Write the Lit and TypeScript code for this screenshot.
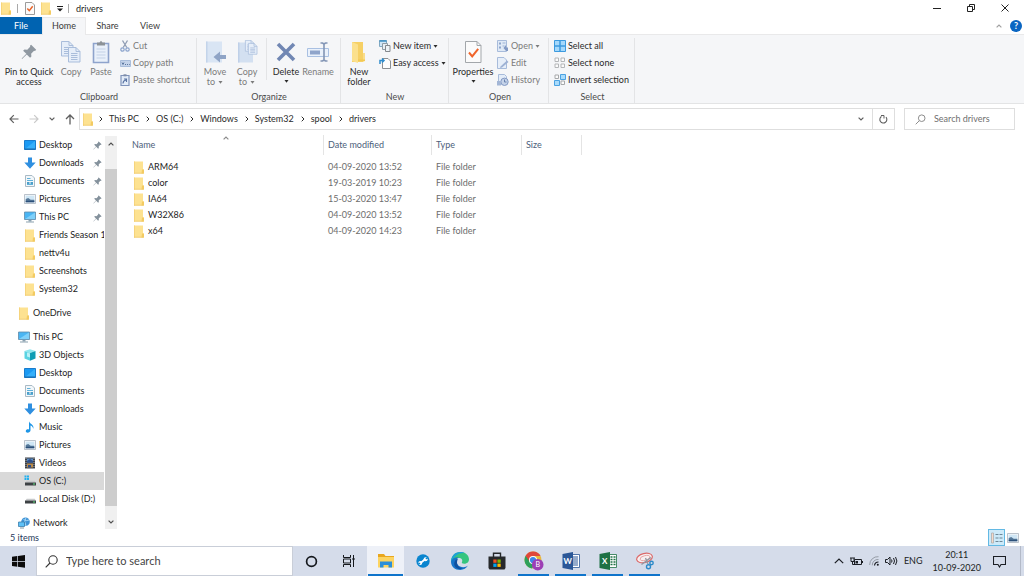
import { LitElement, html, css, svg, nothing, TemplateResult } from "lit";
import { customElement, property } from "lit/decorators.js";
import { classMap } from "lit/directives/class-map.js";

type Art = { box: string; w: number; h: number; art: TemplateResult };

const art = (w: number, h: number, body: TemplateResult, box = `0 0 ${w} ${h}`): Art => ({ box, w, h, art: body });

const folder = svg`<path d="M1 .5h9v8h1v4H1z" fill="#fde291"/><path d="M1 .5h1v12H1z" fill="#f6d47c"/><path d="M9 8.500h2v4H8.500z" fill="#f3cb62"/><path d="M1 11.800h9.500v.7H1z" fill="#eec765"/>`;
const pinShape = svg`<path d="M7.600.6l3.800 3.800-.9.900-.7-.2-2.200 2.200.2 2-1 1L4.300 7.800.8 11.200l-.3-.3L4 7.400 1.600 5.100l1-1 2.100.2L6.900 2l-.2-.6z"/>`;
const picture = svg`<path d="M.5 1.500h11v9H.5z" fill="#f4f7fa" stroke="#a9b4be" stroke-width=".8"/><path d="M1.700 2.700h8.600v6.500H1.700z" fill="#cfe6f5"/><path d="M1.700 6l2.500-1 2.500 1.700h3.600v2.500H1.700z" fill="#56799a"/><path d="M1.700 7.800h8.600v1.400H1.700z" fill="#2c507a"/>`;
const page = (x: number, y: number) => svg`<path transform="translate(${x} ${y})" d="M.5.5h7.500l4 4v10.500H.5z" fill="#e6eef9" stroke="#a9bddb"/><path transform="translate(${x} ${y})" d="M8 .5v4h4M3 6.500h6.500M3 8.500h6.500M3 10.500h6.500M3 12.500h6.500" fill="none" stroke="#a9bddb"/>`;
const disk = svg`<path d="M1.500 7.500l1.200-1.800h8l1 1.800z" fill="#c7c9cb"/><path d="M1 7.500h11v3H1z" fill="#3d4144"/><path d="M9 8.500h2v1H9z" fill="#5be07a"/>`;
const flag = (a: string) => svg`<path d="M0 1.700L5.300 1v5H0zM6 .9L13 0v6H6zM0 6.700h5.300v5L0 11zM6 6.700h7v6l-7-.9z" fill=${a}/>`;

const ICONS: Record<string, Art> = {
  folder: art(12, 13, folder),
  folderBig: art(16, 22, svg`<path d="M1 1h11v20H1z" fill="#f6d065"/><path d="M1 1l6 2.500V22l-6-2z" fill="#fbe08d"/><path d="M12 12h2v8l-2 1z" fill="#f9dd8a"/><path d="M7 20h7v-1.500H7z" fill="#f3c953"/>`),
  check: art(10, 13, svg`<path d="M.5.5h6.500l2.500 2.500v9.500h-9z" fill="#fbfbfb" stroke="#9b9b9b"/><path d="M2.300 6.500l2 2.200 3.400-4.500" fill="none" stroke="#e8642a" stroke-width="1.500"/>`),
  checkBig: art(17, 22, svg`<path d="M.5.5H12l4 4v17H.5z" fill="#fbfbfb" stroke="#a3a7ab"/><path d="M12 .5v4h4" fill="none" stroke="#a3a7ab"/><path d="M4 11.500l3.200 3.800 6-7.500" fill="none" stroke="#f0642a" stroke-width="2"/>`),
  pinBig: art(16, 18, svg`<g fill="#8f98a1">${pinShape}</g>`, "0 0 12 12"),
  pin: art(9, 9, svg`<g fill="#84919c">${pinShape}</g>`, "0 0 12 12"),
  copy: art(20, 22, svg`${page(0, 0)}${page(7, 6)}`),
  paste: art(18, 24, svg`<path d="M1.500 3.500h15v19h-15z" fill="#e9f0fa" stroke="#8ea3cc" stroke-width="1.600"/><path d="M5 5.500V2.500h2.500L9 .7l1.500 1.800H13v3z" fill="#8c9297"/><path d="M4.500 9h9M4.500 12h9M4.500 15h9M4.500 18h9" stroke="#c3d1e6"/>`),
  cut: art(10, 12, svg`<path d="M2.500.5l4.300 7M7.500.5l-4.300 7" stroke="#8f9cb3" stroke-width="1.300"/><circle cx="2.500" cy="9.500" r="1.700" fill="none" stroke="#8aa3cc" stroke-width="1.200"/><circle cx="7.500" cy="9.500" r="1.700" fill="none" stroke="#8aa3cc" stroke-width="1.200"/>`),
  path: art(11, 7, svg`<path d="M.5.5h10v6H.5z" fill="#c4d3ea" stroke="#a9bddb"/><path d="M2 2.500l1 2 1-2M5 4.500h1M7 4.500h1M9 4.500h.8" stroke="#5d779f" fill="none"/>`),
  shortcut: art(10, 12, svg`<path d="M1 1.500h8v10H1z" fill="#e3ecf8" stroke="#7f93bb" stroke-width="1.200"/><path d="M3.500.3h3v2h-3z" fill="#7f8da8"/><path d="M3 9.500q0-3 3-3.500M4 5h2.500v3" fill="none" stroke="#5b74a4" stroke-width="1.100"/>`),
  move: art(21, 22, svg`<path d="M1 .5h16v21H1z" fill="#d9e5f4"/><path d="M1 .5h1.500v21H1z" fill="#c3d4ea"/><path d="M21 14h-6v-3.500L8.500 16l6.500 5.500V18h6z" fill="#8fa4c6"/>`),
  copyTo: art(21, 23, svg`<path d="M1 2.500h15v20H1z" fill="#d3e0f1"/><path d="M1 2.500h1.500v20H1z" fill="#bfd0e8"/><g transform="translate(8 0) scale(.75)">${page(0, 0)}${page(4, 4)}</g>`),
  del: art(20, 20, svg`<path d="M2 2l16 16M18 2L2 18" stroke="#7187b3" stroke-width="3.600"/>`),
  rename: art(22, 20, svg`<path d="M.5 6.500h21v8H.5z" fill="#eaf1fb" stroke="#a9c0e2"/><path d="M3 8.500h10v4H3z" fill="#8fa4ca"/><path d="M13.500 1h2l1.500 1 1.500-1h2M17 2v16M13.500 19h2l1.500-1 1.500 1h2" fill="none" stroke="#8295b5" stroke-width="1.600"/>`),
  newItem: art(12, 12, svg`<path d="M.5.5h7v6h-7z" fill="#cfe6f7" stroke="#7fa8c2"/><path d="M.5 1h7" stroke="#3b8fc4" stroke-width="1.500"/><path d="M3.500 3.500h5v6h-5z" fill="#e8f0f6" stroke="#8f9ca6"/><path d="M6.500 5.500H11v6H6.500z" fill="#eef3f7" stroke="#85898e"/>`),
  easy: art(12, 12, svg`<path d="M3.500 1.500h5.500l2.500 2.500v7.500h-8z" fill="#fdfdfd" stroke="#8b8f93"/><path d="M1 7V3.500h3.500M3 1.500l2 2-2 2" fill="none" stroke="#2f8ccc" stroke-width="1.500"/>`),
  open: art(12, 12, svg`<path d="M.5.5h9v11h-9z" fill="#dfe9f6" stroke="#a7bbdb"/><path d="M2 2.500h2v2H2zM2 6.500h2v2H2z" fill="#8ea6cc"/><path d="M5.500 3h3M5.500 6h2" stroke="#9db3d5"/><path d="M11 7.500H9V5L6.500 8 9 11h2z" fill="#8299c4"/>`),
  edit: art(12, 12, svg`<path d="M.5.500h6.500l2.500 2.500v8.500h-9z" fill="#e6eef9" stroke="#a7bbdb"/><path d="M3.500 9.500l6.500-6 1.500 1.500-6.500 5.500-2 .5z" fill="#9db1d4"/>`),
  history: art(12, 12, svg`<path d="M1.500.500h6l2 2v7h-8z" fill="#e3ecf8" stroke="#a7bbdb"/><circle cx="7.500" cy="7.800" r="3.700" fill="#c5d3e9" stroke="#8299c4"/><path d="M7.500 5.500v2.500h2" fill="none" stroke="#6a82ae"/><path d="M0 7h4v4.500H0z" fill="#a3b6d6"/>`),
  all: art(12, 12, svg`<path d="M.5.500h5.500v5.500h-5.500zM6 .500h5.500v5.500H6zM.5 6h5.500v5.500h-5.500zM6 6h5.500v5.500H6z" fill="#a4d8fb" stroke="#3c9ade"/>`),
  none: art(12, 12, svg`<path d="M1 1h3.500v3.500H1zM7 1h3.500v3.500H7zM1 7h3.500v3.500H1zM7 7h3.500v3.500H7z" fill="#fbfbfb" stroke="#b4b6b8"/>`),
  invert: art(12, 12, svg`<path d="M1 1h3.500v3.500H1zM7 7h3.500v3.500H7z" fill="#fbfbfb" stroke="#a6a8aa"/><path d="M6.500.500h5v5h-5zM.5 6.500h5v5h-5z" fill="#a9dbfb" stroke="#4ba2e2"/>`),
  desktop: art(12, 12, svg`<path d="M.5 1.500h11v9H.5z" fill="#1b9af3" stroke="#1a7ccc"/><path d="M1 10L11 2v8z" fill="#35b0fb"/><path d="M.5 10h11" stroke="#1a69a8"/>`),
  downloads: art(12, 12, svg`<path d="M4 .500h4V5.500h3.700L6 11.800.3 5.500H4z" fill="#2f8fe0"/>`),
  documents: art(12, 12, svg`<path d="M1.500.500h6.500l2.500 2.500v8.500h-9z" fill="#f3f7fa" stroke="#a9bac5"/><path d="M3 3.500h3.500M3 5.500h6M3 9.500h6" stroke="#5fb1da"/><path d="M3 7h2.500v2H3zM6.500 7H9v2H6.500z" fill="#4c9fc9"/>`),
  pictures: art(12, 12, picture),
  pc: art(12, 12, svg`<path d="M.500 1h11v7.500H.500z" fill="#4ab5f3" stroke="#5f8aa8" stroke-width=".8"/><path d="M1 8L11 1.500V8z" fill="#7fd0fa"/><path d="M4.500 9h3v1.300h-3zM2 10.500h8v1H2z" fill="#8ba1b0"/>`),
  objects: art(12, 12, svg`<path d="M.5 2L6 .3 11.500 2 6 4z" fill="#8ee6ee"/><path d="M.5 2L6 4v7.800L.5 9.500z" fill="#5ad3e2"/><path d="M11.500 2L6 4v7.800l5.500-2.300z" fill="#0f9db4"/><path d="M3 3.500l3 1v4l-3-1z" fill="#b9f1f6"/>`),
  music: art(12, 12, svg`<path d="M5 .3c.5 2.700 5.500 3.200 4.200 7.500-.2-2.200-1.700-3-2.700-3.300V9.300c0 2.800-4.700 3.300-4.700 1 0-1.700 1.700-2.300 3.200-1.800z" fill="#1e96e6"/>`),
  videos: art(12, 12, svg`<path d="M1 .500h10v11H1z" fill="#3a3f47"/><path d="M3 1.500h6v4H3z" fill="#5d8fc7"/><path d="M3 6.500h6v4H3z" fill="#b98a4a"/><path d="M3 4l3-2 3 2v1.500H3zM4 8h3v2.500H4z" fill="#2e4f8a"/><path d="M2 1v10.500M10 1v10.500" stroke="#c8ccd0" stroke-dasharray="1 1" stroke-width=".8"/>`),
  os: art(12, 12, svg`${disk}<path d="M.5.500h2v2h-2zM3 .500h2v2H3zM.5 3h2v2h-2zM3 3h2v2H3z" fill="#22b0ee"/>`),
  disk: art(12, 12, disk),
  network: art(12, 12, svg`<circle cx="7.500" cy="4.800" r="4.300" fill="#3f93d6"/><path d="M5.500 2.500q3 2 5.500.5M8 .5q-2.500 4 0 8.500" stroke="#a5d6f5" fill="none"/><path d="M.5 5h6v4.500h-6z" fill="#5ec1f7" stroke="#3c7dab" stroke-width=".8"/><path d="M2 11h4" stroke="#8499a6"/>`),
  search: art(11, 11, svg`<circle cx="6.700" cy="4.200" r="3.300" fill="none" stroke="currentColor"/><path d="M4.300 6.700L.7 10.300" stroke="currentColor"/>`),
  searchBig: art(13, 13, svg`<circle cx="8" cy="5" r="4.200" fill="none" stroke="currentColor" stroke-width="1.100"/><path d="M5 8L.7 12.300" stroke="currentColor" stroke-width="1.100"/>`),
  back: art(10, 10, svg`<path d="M9.500 5H1.500M4.800 1.200L1 5l3.800 3.800" fill="none" stroke="currentColor" stroke-width="1.200"/>`),
  forward: art(10, 10, svg`<path d="M.5 5h8M5.200 1.200L9 5 5.200 8.800" fill="none" stroke="currentColor" stroke-width="1.200"/>`),
  up: art(10, 11, svg`<path d="M5 10.500V1.500M1 5l4-4 4 4" fill="none" stroke="currentColor" stroke-width="1.300"/>`),
  right: art(4, 6, svg`<path d="M.7.700L3 3 .7 5.300" fill="none" stroke="currentColor"/>`),
  down: art(6, 4, svg`<path d="M.6.600L3 3 5.400.6" fill="none" stroke="currentColor" stroke-width="1.200"/>`),
  upSmall: art(6, 4, svg`<path d="M.6 3.400L3 1l2.400 2.400" fill="none" stroke="currentColor" stroke-width="1.200"/>`),
  caret: art(5, 3, svg`<path d="M.5 0h4L2.500 2.700z" fill="currentColor"/>`),
  quick: art(6, 6, svg`<path d="M0 .5h6" stroke="currentColor"/><path d="M0 2.500h6L3 5.500z" fill="currentColor"/>`),
  refresh: art(9, 9, svg`<path d="M2.500 1.500A3.500 3.500 0 1 0 7 2.200" fill="none" stroke="currentColor" stroke-width="1.100"/><path d="M2 .5h3V3.500" fill="none" stroke="currentColor"/>`),
  min: art(8, 8, svg`<path d="M0 4.500h8" stroke="currentColor"/>`),
  max: art(8, 8, svg`<path d="M.5 2.500h5v5h-5zM2.500 2V.500h5v5H6" fill="none" stroke="currentColor"/>`),
  close: art(8, 8, svg`<path d="M.5.500l7 7M7.500.500l-7 7" stroke="currentColor"/>`),
  details: art(14, 14, svg`<path d="M1.500 2h2v10h-2z" fill="#f6d9c8" stroke="#a8a8a8" stroke-width=".7"/><path d="M5.500 3.500h3M9.500 3.500h3M5.500 7h3M9.500 7h3M5.500 10.500h3M9.500 10.500h3" stroke="#6d8797"/>`),
  windows: art(13, 13, flag("#0b0b0b")),
  cortana: art(13, 13, svg`<circle cx="6.500" cy="6.500" r="4.900" fill="none" stroke="#15181d" stroke-width="1.700"/>`),
  taskview: art(14, 12, svg`<path d="M1.500 0v2.500h7V0M1.500 12V9.500h7V12M1.500 4h7v4h-7z" fill="none" stroke="#15181d"/><path d="M11.500 0v12" stroke="#15181d"/><path d="M10.500 3h2v2h-2z" fill="#15181d"/>`),
  explorer: art(18, 16, svg`<path d="M1 1h6l1.500 2H17v4H1z" fill="#e9a71f"/><path d="M1 4h16v10.500H1z" fill="#fcd462"/><path d="M3 14.500V8.500h12v6h-3.500v-2.500h-5v2.500z" fill="#2b8fd9"/>`),
  tool: art(14, 14, svg`<circle cx="7" cy="7" r="6.700" fill="#0a85cf"/><path d="M4.500 9l5-4" stroke="#fff" stroke-width="1.900"/><circle cx="4.300" cy="9" r="1.900" fill="#fff"/><circle cx="9.600" cy="5.200" r="2" fill="#fff"/><path d="M2.300 10.300l1.800-1.300M9.800 5l2-1.500" stroke="#0a85cf" stroke-width="1.300"/>`),
  edge: art(18, 18, svg`<path d="M0 10C0 4 4 0 9.300 0 14.500 0 18 3.500 18 7.300c0 3-2.300 4.500-4.800 4.500-2 0-2.800-.8-2.200-1.700.8-1.500 0-4-3-4C4 6.100 1 8 0 10z" fill="#36c57f"/><path d="M0 10C0 4 4 0 9.300 0c2 0 3.500.5 4.700 1.300-6-1-10 1.700-14 8.700z" fill="#1d9fd8"/><path d="M0 9.500C1 6.500 4 5 7.500 5.200 4.500 7 5 12.500 9 14.500c3 1.300 6 .6 8-.9-1.500 2.800-4.500 4.400-7.800 4.400C4 18 0 14.500 0 9.500z" fill="#1674c9"/><path d="M6.200 9c-1 4 2 7.500 6 7.300-3.500 2-8.700 0-9-4.300C3 9.500 5 7 7 6.500 6.600 7.200 6.300 8 6.200 9z" fill="#10509f"/>`),
  store: art(18, 18, svg`<path d="M5.500 5V1.200h7V5" fill="none" stroke="#26282b" stroke-width="1.400"/><path d="M.5 4.500h17V16l-1 1.500h-15L.5 16z" fill="#26282b"/><path d="M5.300 7.500h3.300v3.300H5.300z" fill="#f25022"/><path d="M9.400 7.500h3.300v3.300H9.400z" fill="#7fba00"/><path d="M5.300 11.600h3.300v3.300H5.300z" fill="#00a4ef"/><path d="M9.400 11.600h3.300v3.300H9.400z" fill="#ffb900"/>`),
  chrome: art(20, 20, svg`<circle cx="9" cy="9" r="8.500" fill="#e8b93a"/><path d="M9 9L1.600 4.800A8.500 8.500 0 0 0 8 17.400L12 11z" fill="#2da05a"/><path d="M1.600 4.800A8.500 8.500 0 0 1 16.600 5H9.500L5.500 10.500z" fill="#e0463a"/><circle cx="9" cy="9" r="4" fill="#fff"/><circle cx="9" cy="9" r="3.100" fill="#3f86e8"/><circle cx="13.700" cy="13.700" r="5.800" fill="#9c3fb5"/><text x="13.700" y="16" text-anchor="middle" font-size="7" fill="#fff">B</text>`),
  word: art(18, 18, svg`<path d="M9 2.500h8.500v13H9z" fill="#fff" stroke="#2b5797" stroke-width=".8"/><path d="M11 5h5M11 7h5M11 9h5M11 11h5M11 13h5" stroke="#2b5797"/><path d="M.5 2L11 0v18L.5 16z" fill="#2b5797"/><text x="5.800" y="12" text-anchor="middle" font-size="8" font-weight="700" fill="#fff">W</text>`),
  excel: art(18, 18, svg`<path d="M9 2.500h8.500v13H9z" fill="#fff" stroke="#1e7145" stroke-width=".8"/><path d="M11.500 5h2M14.500 5h2M11.500 7.500h2M14.500 7.500h2M11.500 10h2M14.500 10h2M11.500 12.500h2M14.500 12.500h2" stroke="#1e7145" stroke-width="1.300"/><path d="M.5 2L11 0v18L.5 16z" fill="#1e7145"/><text x="5.800" y="12" text-anchor="middle" font-size="8" font-weight="700" fill="#fff">X</text>`),
  snip: art(18, 18, svg`<ellipse cx="8.500" cy="6" rx="8" ry="4.500" transform="rotate(-14 8.500 6)" fill="#f7eff0" stroke="#dc6a6a" stroke-width="1.200"/><ellipse cx="9" cy="6" rx="5" ry="2.300" transform="rotate(-14 9 6)" fill="none" stroke="#e39a9a" stroke-width=".8"/><path d="M5.500 12.500L15 5.500M12 12L9.500 6" stroke="#8f9aa4" stroke-width="1.300"/><circle cx="12.500" cy="14.800" r="2" fill="none" stroke="#2c8ac9" stroke-width="1.400"/><circle cx="15.500" cy="11" r="1.700" fill="none" stroke="#2c8ac9" stroke-width="1.400"/>`),
  trayUp: art(10, 6, svg`<path d="M.8 5.200L5 1l4.200 4.200" fill="none" stroke="currentColor" stroke-width="1.200"/>`),
  battery: art(13, 9, svg`<path d="M4.500 2.500h7v5h-7z" fill="none" stroke="currentColor"/><path d="M12 4h1v2h-1z" fill="currentColor"/><path d="M5.500 4h2.500v2.500H5.500z" fill="currentColor"/><path d="M0 1h5M1 1v3.500h3V1M2.500 4v3.500H5" fill="none" stroke="currentColor"/>`),
  wifi: art(10, 10, svg`<path d="M.7 9A8 8 0 0 1 9.500.7M3.300 9.300A5.500 5.500 0 0 1 9.500 3.500" fill="none" stroke="#8d949e" stroke-width=".9"/><path d="M5.500 9.500A4 4 0 0 1 9.500 6" fill="none" stroke="currentColor" stroke-width="1.200"/><circle cx="8.800" cy="8.800" r="1" fill="currentColor"/>`),
  sound: art(13, 10, svg`<path d="M.5 3.500h2L5 1v8L2.500 6.500h-2z" fill="none" stroke="currentColor"/><path d="M6.500 3.500q1 1.500 0 3M8.500 2q2 3 0 6M10.500 1q2.800 4 0 8" fill="none" stroke="currentColor"/>`),
  notify: art(13, 13, svg`<path d="M.5 1.500h12v8H8l-1.500 2.500L5 9.500H.5z" fill="none" stroke="currentColor" stroke-width="1.100"/>`),
};

const icon = (name: string) => {
  const i = ICONS[name];
  return html`<svg class="icon" width=${i.w} height=${i.h} viewBox=${i.box} aria-hidden="true">${i.art}</svg>`;
};

const base = css`
  * { box-sizing: border-box; }
  button, input { font: inherit; color: inherit; background: none; border: 0; margin: 0; padding: 0; outline: none; }
  a { color: inherit; text-decoration: none; }
  ul, ol { list-style: none; margin: 0; padding: 0; }
  .icon { display: block; flex: none; }
`;

type Cmd = { label: string; icon: string; off?: boolean; caret?: boolean };

@customElement("ribbon-button")
class RibbonButton extends LitElement {
  @property() label = "";
  @property() tail = "";
  @property() icon = "";
  @property({ type: Boolean }) off = false;
  @property({ type: Boolean }) caret = false;
  @property({ type: Boolean }) big = false;

  static styles = [base, css`
    :host { display: block; }
    .cmd { display: flex; align-items: center; gap: 2px; height: 16px; color: #2a2a2a; white-space: nowrap; }
    .cmd.off { color: #7b7b7b; }
    .slot { width: 12px; display: flex; justify-content: center; }
    .big { flex-direction: column; width: 100%; height: auto; line-height: 10px; }
    .big .slot { width: auto; height: 27px; align-items: center; }
    .label { display: block; }
    .tail { display: flex; align-items: center; justify-content: center; gap: 3px; min-height: 8px; }
  `];

  render() {
    const cls = classMap({ cmd: true, off: this.off, big: this.big });
    return html`<button class=${cls} ?disabled=${this.off}>
      <span class="slot">${icon(this.icon)}</span>
      ${this.big
        ? html`<span><span class="label">${this.label}</span><span class="tail">${this.tail}${this.caret ? icon("caret") : nothing}</span></span>`
        : html`<span>${this.label}</span>${this.caret ? icon("caret") : nothing}`}
    </button>`;
  }
}

@customElement("explorer-ribbon")
class ExplorerRibbon extends LitElement {
  static styles = [base, css`
    :host { display: block; background: #f5f6f8; border-top: 1px solid #e9e9ea; border-bottom: 1px solid #e3e4e5; }
    .groups { display: flex; height: 68px; padding: 3px 0 0; }
    .group { display: flex; flex-direction: column; justify-content: space-between; border-right: 1px solid #e3e4e6; }
    .tools { display: flex; }
    .name { text-align: center; line-height: 12px; color: #4b4b4b; }
    .stack { display: flex; flex-direction: column; gap: 1px; padding-left: 3px; }
    .clipboard { width: 197px; padding-left: 2px; }
    .organize { width: 144px; padding-left: 1px; }
    .new { width: 108px; padding-left: 1px; }
    .open { width: 100px; padding-left: 3px; }
    .select { width: 86px; padding-left: 2px; }
    .rule { width: 1px; height: 42px; margin: 0 4px; background: #e3e4e6; }
    .w30 { width: 30px; }
    .w34 { width: 34px; }
    .w42 { width: 42px; }
    .w54 { width: 54px; }
  `];

  stack(cmds: Cmd[]) {
    return html`<div class="stack">${cmds.map((c) => html`<ribbon-button .label=${c.label} .icon=${c.icon} .off=${!!c.off} .caret=${!!c.caret}></ribbon-button>`)}</div>`;
  }

  render() {
    return html`<div class="groups">
      <section class="group clipboard">
        <div class="tools">
          <ribbon-button class="w54" big label="Pin to Quick" tail="access" icon="pinBig"></ribbon-button>
          <ribbon-button class="w30" big off label="Copy" icon="copy"></ribbon-button>
          <ribbon-button class="w30" big off label="Paste" icon="paste"></ribbon-button>
          ${this.stack([{ label: "Cut", icon: "cut", off: true }, { label: "Copy path", icon: "path", off: true }, { label: "Paste shortcut", icon: "shortcut", off: true }])}
        </div>
        <div class="name">Clipboard</div>
      </section>
      <section class="group organize">
        <div class="tools">
          <ribbon-button class="w34" big off caret label="Move" tail="to" icon="move"></ribbon-button>
          <ribbon-button class="w30" big off caret label="Copy" tail="to" icon="copyTo"></ribbon-button>
          <span class="rule"></span>
          <ribbon-button class="w30" big caret label="Delete" icon="del"></ribbon-button>
          <ribbon-button class="w34" big off label="Rename" icon="rename"></ribbon-button>
        </div>
        <div class="name">Organize</div>
      </section>
      <section class="group new">
        <div class="tools">
          <ribbon-button class="w34" big label="New" tail="folder" icon="folderBig"></ribbon-button>
          ${this.stack([{ label: "New item", icon: "newItem", caret: true }, { label: "Easy access", icon: "easy", caret: true }])}
        </div>
        <div class="name">New</div>
      </section>
      <section class="group open">
        <div class="tools">
          <ribbon-button class="w42" big caret label="Properties" icon="checkBig"></ribbon-button>
          ${this.stack([{ label: "Open", icon: "open", off: true, caret: true }, { label: "Edit", icon: "edit", off: true }, { label: "History", icon: "history", off: true }])}
        </div>
        <div class="name">Open</div>
      </section>
      <section class="group select">
        <div class="tools">
          ${this.stack([{ label: "Select all", icon: "all" }, { label: "Select none", icon: "none" }, { label: "Invert selection", icon: "invert" }])}
        </div>
        <div class="name">Select</div>
      </section>
    </div>`;
  }
}

type Place = { label: string; icon: string; level?: number; pinned?: boolean; active?: boolean; gap?: boolean };

const PLACES: Place[] = [
  { label: "Desktop", icon: "desktop", pinned: true },
  { label: "Downloads", icon: "downloads", pinned: true },
  { label: "Documents", icon: "documents", pinned: true },
  { label: "Pictures", icon: "pictures", pinned: true },
  { label: "This PC", icon: "pc", pinned: true },
  { label: "Friends Season 1", icon: "folder" },
  { label: "nettv4u", icon: "folder" },
  { label: "Screenshots", icon: "folder" },
  { label: "System32", icon: "folder" },
  { label: "OneDrive", icon: "folder", level: 1, gap: true },
  { label: "This PC", icon: "pc", level: 1, gap: true },
  { label: "3D Objects", icon: "objects" },
  { label: "Desktop", icon: "desktop" },
  { label: "Documents", icon: "documents" },
  { label: "Downloads", icon: "downloads" },
  { label: "Music", icon: "music" },
  { label: "Pictures", icon: "pictures" },
  { label: "Videos", icon: "videos" },
  { label: "OS (C:)", icon: "os", active: true },
  { label: "Local Disk (D:)", icon: "disk" },
  { label: "Network", icon: "network", level: 1, gap: true },
];

@customElement("nav-pane")
class NavPane extends LitElement {
  static styles = [base, css`
    :host { display: flex; min-height: 0; padding-top: 1px; }
    .list { flex: 1; min-width: 0; overflow: hidden; }
    .gap { margin-top: 6px; }
    .place { display: flex; align-items: center; gap: 3px; height: 18px; padding: 0 2px 0 24px; color: #1d1d1d; }
    .top { padding-left: 18px; }
    .active { background: #d9d9d9; }
    .label { flex: 1; white-space: nowrap; }
    .bar { display: flex; flex-direction: column; width: 12px; margin-left: 1px; background: #f0f0f0; color: #505050; }
    .step { display: flex; align-items: center; justify-content: center; height: 15px; }
    .track { flex: 1; display: flex; flex-direction: column; padding: 18px 0 8px; }
    .thumb { flex: 1; background: #cdcdcd; }
  `];

  render() {
    return html`<ul class="list">${PLACES.map((p) => html`
        <li class=${classMap({ gap: !!p.gap })}><a href="#" class=${classMap({ place: true, top: p.level === 1, active: !!p.active })}>
          ${icon(p.icon)}<span class="label">${p.label}</span>${p.pinned ? icon("pin") : nothing}</a></li>`)}
      </ul>
      <div class="bar">
        <button class="step" aria-label="Scroll up">${icon("upSmall")}</button>
        <div class="track"><div class="thumb"></div></div>
        <button class="step" aria-label="Scroll down">${icon("down")}</button>
      </div>`;
  }
}

const FILES = [
  ["ARM64", "04-09-2020 13:52"],
  ["color", "19-03-2019 10:23"],
  ["IA64", "15-03-2020 13:47"],
  ["W32X86", "04-09-2020 13:52"],
  ["x64", "04-09-2020 14:23"],
];

@customElement("file-list")
class FileList extends LitElement {
  static styles = [base, css`
    :host { display: block; padding-left: 11px; }
    .files { border-collapse: separate; border-spacing: 0; table-layout: fixed; width: 454px; }
    .name { width: 196px; }
    .date { width: 108px; }
    .type { width: 90px; }
    .size { width: 60px; }
    th { position: relative; height: 20px; padding: 0 0 0 4px; border-right: 1px solid #e4e4e4; text-align: left; font-weight: 400; color: #4c607a; }
    td { height: 16px; padding: 0 0 0 4px; color: #6d6d6d; white-space: nowrap; }
    .sort { position: absolute; top: 1px; left: 0; right: 0; display: flex; justify-content: center; color: #8c8c8c; }
    .spacer { height: 4px; }
    .file { display: flex; align-items: center; gap: 3px; color: #1d1d1d; padding-left: 1px; }
  `];

  render() {
    return html`<table class="files">
      <thead><tr>
        <th class="name">Name<span class="sort">${icon("upSmall")}</span></th>
        <th class="date">Date modified</th><th class="type">Type</th><th class="size">Size</th>
      </tr></thead>
      <tbody>
        <tr><td class="spacer" colspan="4"></td></tr>
        ${FILES.map(([name, date]) => html`<tr><td><a href="#" class="file">${icon("folder")}${name}</a></td><td>${date}</td><td>File folder</td><td></td></tr>`)}
      </tbody>
    </table>`;
  }
}

const APPS = [
  { name: "File Explorer", icon: "explorer", active: true, open: true },
  { name: "Support Assistant", icon: "tool" },
  { name: "Edge", icon: "edge" },
  { name: "Store", icon: "store" },
  { name: "Chrome", icon: "chrome", open: true },
  { name: "Word", icon: "word", open: true },
  { name: "Excel", icon: "excel", open: true },
  { name: "Snipping Tool", icon: "snip", open: true },
];

@customElement("task-bar")
class TaskBar extends LitElement {
  static styles = [base, css`
    :host { display: flex; height: 30px; background: #d5dcea; color: #1b1e24; }
    .task { display: flex; align-items: center; justify-content: center; width: 37px; }
    .start { width: 36px; }
    .find { display: flex; align-items: center; gap: 8px; width: 257px; padding: 0 8px; background: #fff; border: 1px solid #c9ced8; color: #333; }
    .field { flex: 1; min-width: 0; font-size: 11px; }
    .field::placeholder { color: #454545; opacity: 1; }
    .apps { display: flex; }
    .app { position: relative; display: flex; align-items: center; justify-content: center; width: 37px; }
    .on { background: #eef1f8; }
    .open::after { content: ""; position: absolute; left: 3px; right: 3px; bottom: 0; height: 2px; background: #0f74cb; }
    .on::after { left: 1px; right: 1px; }
    .tray { display: flex; align-items: center; gap: 6px; margin-left: auto; }
    .clock { line-height: 13px; text-align: center; padding: 0 6px 0 4px; }
    .peek { width: 4px; height: 30px; margin-left: 8px; border-left: 1px solid #b3bac8; }
  `];

  render() {
    return html`
      <button class="task start" aria-label="Start">${icon("windows")}</button>
      <label class="find">${icon("searchBig")}<input class="field" type="text" aria-label="Type here to search" placeholder="Type here to search"></label>
      <button class="task" aria-label="Cortana">${icon("cortana")}</button>
      <button class="task" aria-label="Task View">${icon("taskview")}</button>
      <div class="apps">${APPS.map((a) => html`<button aria-label=${a.name} class=${classMap({ app: true, on: !!a.active, open: !!a.open })}>${icon(a.icon)}</button>`)}</div>
      <div class="tray">
        <button aria-label="Hidden icons">${icon("trayUp")}</button>
        <button aria-label="Battery">${icon("battery")}</button>
        <button aria-label="Network">${icon("wifi")}</button>
        <button aria-label="Volume">${icon("sound")}</button>
        <button>ENG</button>
        <button class="clock">20:11<br>10-09-2020</button>
        <button aria-label="Notifications">${icon("notify")}</button>
        <span class="peek"></span>
      </div>`;
  }
}

const CRUMBS = ["This PC", "OS (C:)", "Windows", "System32", "spool", "drivers"];

@customElement("app-root")
class AppRoot extends LitElement {
  static styles = [base, css`
    :host { display: flex; flex-direction: column; height: 100vh; overflow: hidden; background: #fff; color: #1d1d1d; font: 9px/12px Lato, "Open Sans", sans-serif; }
    .title { display: flex; align-items: center; height: 17px; }
    .quick { display: flex; align-items: center; gap: 5px; }
    .bar { width: 1px; height: 9px; margin-right: 2px; background: #a9a9a9; }
    .caption { display: flex; align-self: flex-start; margin-left: auto; padding-right: 2px; color: #222; }
    .win { display: flex; align-items: center; justify-content: center; width: 34px; height: 16px; }
    .tabs { display: flex; height: 17px; }
    .tab { height: 17px; text-align: center; color: #3a3a3a; }
    .file { width: 42px; background: #0063b1; color: #fff; }
    .home { width: 44px; height: 18px; padding-bottom: 2px; background: #f5f6f8; border: 1px solid #e9e9ea; border-bottom: 0; position: relative; z-index: 1; }
    .share { width: 43px; }
    .view { width: 42px; }
    .aside { display: flex; align-items: center; gap: 8px; margin-left: auto; padding-right: 2px; color: #a0a0a0; }
    .help { width: 12px; height: 12px; border-radius: 50%; background: #0a66c2; color: #fff; font-weight: 700; line-height: 12px; }
    .address { display: flex; align-items: center; height: 30px; padding: 0 9px; color: #5f5f5f; }
    .moves { display: flex; align-items: center; gap: 10px; width: 70px; }
    .dim { color: #c9c9c9; }
    .path { display: flex; align-items: center; flex: 1; height: 22px; border: 1px solid #dedede; padding-left: 2px; }
    .crumbs { display: flex; align-items: center; gap: 7px; margin-left: 5px; }
    .crumb { display: flex; align-items: center; gap: 6px; color: #2b2b2b; }
    .drop { width: 22px; height: 20px; margin-left: auto; display: flex; align-items: center; justify-content: center; }
    .refresh { border-left: 1px solid #dedede; margin-left: 0; }
    .find { display: flex; align-items: center; gap: 8px; width: 111px; height: 22px; margin-left: 9px; padding: 0 10px; border: 1px solid #dedede; color: #8d8d8d; }
    .field { flex: 1; min-width: 0; }
    .field::placeholder { color: #6f6f6f; opacity: 1; }
    .body { display: grid; grid-template-columns: 117px 1fr; flex: 1; min-height: 0; padding-top: 1px; }
    .status { display: flex; align-items: center; height: 17px; padding-left: 10px; color: #1e395b; }
    .views { display: flex; align-items: center; gap: 2px; margin-left: auto; padding-right: 5px; }
    .mode { display: flex; align-items: center; justify-content: center; height: 17px; width: 12px; }
    .chosen { width: 17px; background: #cdeaf9; border: 1px solid #63b9e4; }
  `];

  render() {
    return html`
      <header class="title">
        <div class="quick">
          ${icon("folder")}<span class="bar"></span>
          <button aria-label="Properties">${icon("check")}</button>
          <button aria-label="New folder">${icon("folder")}</button>
          <button aria-label="Customize">${icon("quick")}</button><span class="bar"></span>
          <span>drivers</span>
        </div>
        <div class="caption">
          <button class="win" aria-label="Minimize">${icon("min")}</button>
          <button class="win" aria-label="Restore">${icon("max")}</button>
          <button class="win" aria-label="Close">${icon("close")}</button>
        </div>
      </header>
      <nav class="tabs">
        <button class="tab file">File</button><button class="tab home">Home</button>
        <button class="tab share">Share</button><button class="tab view">View</button>
        <div class="aside"><button aria-label="Collapse ribbon">${icon("upSmall")}</button><button class="help">?</button></div>
      </nav>
      <explorer-ribbon></explorer-ribbon>
      <div class="address">
        <div class="moves">
          <button aria-label="Back">${icon("back")}</button>
          <button class="dim" aria-label="Forward">${icon("forward")}</button>
          <button aria-label="Recent">${icon("down")}</button>
          <button aria-label="Up">${icon("up")}</button>
        </div>
        <div class="path">
          ${icon("folder")}
          <nav class="crumbs">${CRUMBS.map((c) => html`<span class="crumb">${icon("right")}<a href="#">${c}</a></span>`)}</nav>
          <button class="drop" aria-label="Previous locations">${icon("down")}</button>
          <button class="drop refresh" aria-label="Refresh">${icon("refresh")}</button>
        </div>
        <label class="find">${icon("search")}<input class="field" type="text" aria-label="Search drivers" placeholder="Search drivers"></label>
      </div>
      <main class="body"><nav-pane></nav-pane><file-list></file-list></main>
      <footer class="status">
        <span>5 items</span>
        <div class="views">
          <button class="mode chosen" aria-label="Details">${icon("details")}</button>
          <button class="mode" aria-label="Thumbnails">${icon("pictures")}</button>
        </div>
      </footer>
      <task-bar></task-bar>`;
  }
}
